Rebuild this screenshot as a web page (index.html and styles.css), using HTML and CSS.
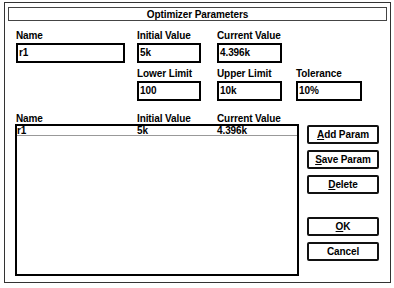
FILE: index.html
```html
<!DOCTYPE html>
<html>
<head>
<meta charset="utf-8">
<link rel="stylesheet" href="styles.css">
</head>
<body>
<div class="dialog">
  <div class="title">Optimizer Parameters</div>
  <div class="params">
    <div class="field"><div class="lbl">Name</div><div class="box w-name">r1</div></div>
    <div class="field"><div class="lbl">Initial Value</div><div class="box w-64">5k</div></div>
    <div class="field"><div class="lbl">Current Value</div><div class="box w-65">4.396k</div></div>
    <div class="field"></div>
    <div class="field"></div>
    <div class="field"><div class="lbl">Lower Limit</div><div class="box w-64">100</div></div>
    <div class="field"><div class="lbl">Upper Limit</div><div class="box w-65">10k</div></div>
    <div class="field"><div class="lbl">Tolerance</div><div class="box w-66">10%</div></div>
  </div>
  <div class="lower">
    <div class="listcol">
      <div class="list-head">
        <span class="c1">Name</span><span class="c2">Initial Value</span><span class="c3">Current Value</span>
      </div>
      <div class="listbox">
        <div class="row"><span class="c1">r1</span><span class="c2">5k</span><span class="c3">4.396k</span></div>
      </div>
    </div>
    <div class="buttons">
      <div class="btn"><u>A</u>dd Param</div>
      <div class="btn"><u>S</u>ave Param</div>
      <div class="btn"><u>D</u>elete</div>
      <div class="btn ok"><u>O</u>K</div>
      <div class="btn">Cancel</div>
    </div>
  </div>
</div>
</body>
</html>
```

FILE: styles.css
```css
html, body {
  margin: 0;
  padding: 0;
  background: #fff;
}
body {
  font-family: "Liberation Sans", Arial, sans-serif;
  font-weight: bold;
  font-size: 10px;
  color: #000;
  letter-spacing: -0.1px;
}
.dialog {
  box-sizing: border-box;
  margin: 2px 0 0 4px;
  width: 387px;
  height: 281px;
  border: 1px solid #333;
}
.title {
  box-sizing: border-box;
  margin: 4px 3px 0 3px;
  height: 14px;
  border: 1px solid #444;
  text-align: center;
  line-height: 12px;
  padding-top: 1px;
}
.params {
  display: grid;
  grid-template-columns: 121px 80px 79px 66px;
  row-gap: 5px;
  margin: 9px 0 0 11px;
}
.field {
  display: flex;
  flex-direction: column;
  gap: 1px;
}
.lbl {
  height: 12px;
  line-height: 12px;
  white-space: nowrap;
}
.box {
  box-sizing: border-box;
  height: 20px;
  border: 2px solid #000;
  line-height: 16px;
  padding-left: 1px;
}
.w-name { width: 109px; }
.w-64 { width: 64px; }
.w-65 { width: 65px; }
.w-66 { width: 66px; }
.lower {
  display: flex;
  margin: 13px 0 0 10px;
}
.listcol {
  display: flex;
  flex-direction: column;
  width: 284px;
}
.list-head {
  display: flex;
  height: 10px;
  line-height: 10px;
  padding-left: 1px;
}
.c1 { width: 121px; }
.c2 { width: 80px; }
.c3 { white-space: nowrap; }
.listbox {
  box-sizing: border-box;
  height: 152px;
  border: 2px solid #000;
}
.row {
  display: flex;
  height: 9px;
  line-height: 9px;
  border-bottom: 1px solid #999;
}
.row .c1 { width: 120px; }
.buttons {
  display: flex;
  flex-direction: column;
  gap: 6px;
  margin: 11px 0 0 8px;
}
.btn {
  box-sizing: border-box;
  width: 72px;
  height: 19px;
  border: 2px solid #111;
  border-radius: 2px;
  text-align: center;
  line-height: 15px;
}
.btn.ok {
  margin-top: 17px;
}
```
